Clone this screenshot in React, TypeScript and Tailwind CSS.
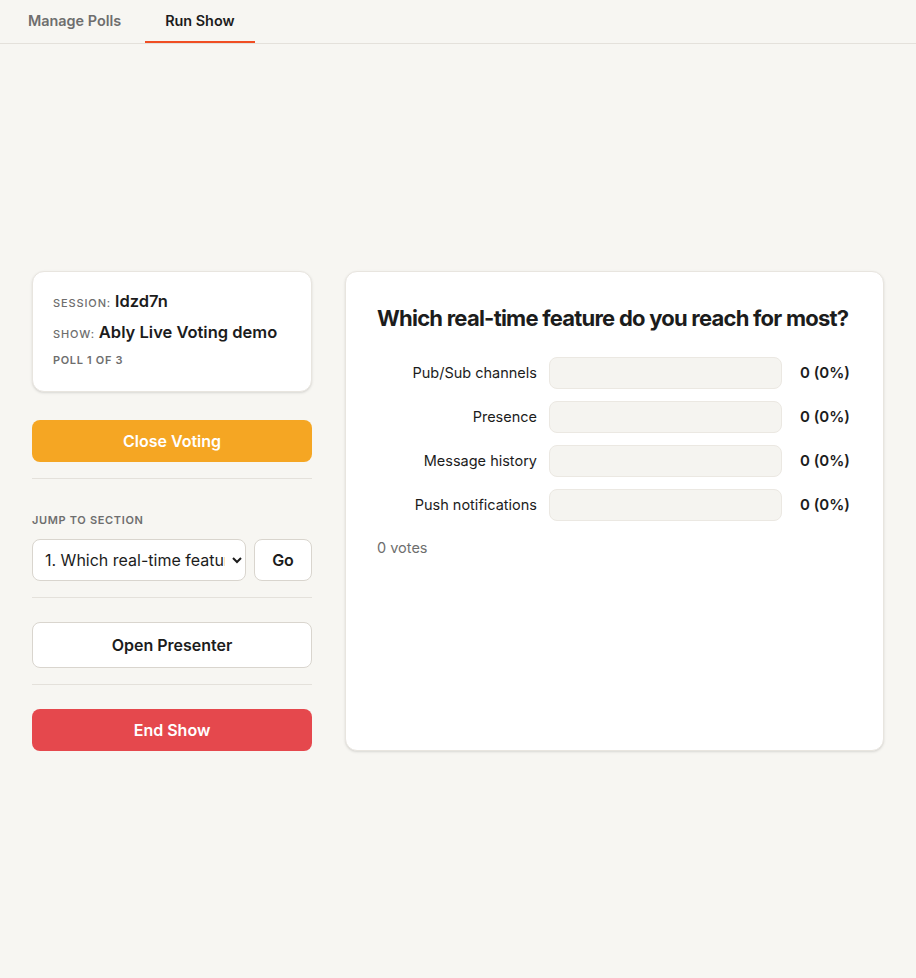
import { useState } from "react";

type Option = {
  label: string;
  votes: number;
};

const options: Option[] = [
  { label: "Pub/Sub channels", votes: 0 },
  { label: "Presence", votes: 0 },
  { label: "Message history", votes: 0 },
  { label: "Push notifications", votes: 0 },
];

export default function App() {
  const [tab, setTab] = useState<string>("run");
  const total = options.reduce((sum, o) => sum + o.votes, 0);

  return (
    <div
      className="min-h-screen flex flex-col bg-[#f7f6f2] text-[#1c1c1c]"
      style={{ fontFamily: "Inter, 'Liberation Sans', sans-serif" }}
    >
      {/* tabs */}
      <div className="flex gap-1 h-[44px] border-b border-[#e4e1db] px-2">
        <button
          onClick={() => setTab("manage")}
          className={`px-5 text-[14.4px] font-semibold border-b-2 ${
            tab === "manage" ? "border-[#f04e23] text-[#1c1c1c]" : "border-transparent text-[#6e6e6e]"
          }`}
        >
          Manage Polls
        </button>
        <button
          onClick={() => setTab("run")}
          className={`px-5 text-[14.4px] font-semibold border-b-2 ${
            tab === "run" ? "border-[#f04e23] text-[#1c1c1c]" : "border-transparent text-[#6e6e6e]"
          }`}
        >
          Run Show
        </button>
      </div>

      <div className="flex-1 flex items-center px-8">
        <div className="flex w-full gap-[33px] items-start">
          {/* left column */}
          <div className="w-[280px] shrink-0 flex flex-col">
            <div className="bg-white rounded-xl border border-[#e8e5df] shadow-sm px-5 pt-[17px] pb-[23px]">
              <div className="flex items-baseline gap-1">
                <span className="text-[11px] font-medium uppercase tracking-[0.08em] text-[#6e6e6e]">Session:</span>
                <span className="text-[16.5px] font-semibold">ldzd7n</span>
              </div>
              <div className="flex items-baseline gap-1 mt-[6px]">
                <span className="text-[11px] font-medium uppercase tracking-[0.08em] text-[#6e6e6e]">Show:</span>
                <span className="text-[16.5px] font-semibold">Ably Live Voting demo</span>
              </div>
              <div className="text-[11px] font-semibold uppercase tracking-[0.06em] text-[#6e6e6e] mt-[7px]">
                Poll 1 of 3
              </div>
            </div>

            <button className="mt-[28px] h-[42px] rounded-lg bg-[#f5a623] text-white font-semibold text-base">
              Close Voting
            </button>

            <div className="border-t border-[#e4e1db] mt-4 mb-[33px]" />

            <div className="text-[11px] font-semibold uppercase tracking-[0.06em] text-[#6e6e6e]">Jump to section</div>
            <div className="flex gap-2 mt-[10px]">
              <select className="flex-1 min-w-0 h-[42px] rounded-lg border border-[#d9d5ce] bg-white pl-2 pr-1 text-base text-[#1c1c1c]">
                <option>1. Which real-time feature do you reach for most?</option>
                <option>2. Next poll</option>
                <option>3. Last poll</option>
              </select>
              <button className="w-[58px] h-[42px] rounded-lg border border-[#d9d5ce] bg-white font-semibold text-base">
                Go
              </button>
            </div>

            <div className="border-t border-[#e4e1db] mt-4 mb-[24px]" />

            <button className="h-[46px] rounded-lg border border-[#d9d5ce] bg-white font-semibold text-base">
              Open Presenter
            </button>

            <div className="border-t border-[#e4e1db] mt-4 mb-[24px]" />

            <button className="h-[42px] rounded-lg bg-[#e5484d] text-white font-semibold text-base">
              End Show
            </button>
          </div>

          {/* poll card */}
          <div className="flex-1 min-w-0 h-[480px] bg-white rounded-xl border border-[#e8e5df] shadow-sm px-[31px] pt-[30px]">
            <h2 className="text-[22px] font-bold tracking-[-0.035em] whitespace-nowrap">
              Which real-time feature do you reach for most?
            </h2>
            <div className="flex flex-col gap-3 mt-[22px]">
              {options.map((o) => {
                const pct = total > 0 ? Math.round((o.votes / total) * 100) : 0;
                return (
                  <div key={o.label} className="flex items-center">
                    <div className="w-[172px] shrink-0 text-right text-[14.5px] pr-3">{o.label}</div>
                    <div className="w-[233px] h-[32px] rounded-lg bg-[#f5f4f0] border border-[#ebe8e2] overflow-hidden">
                      <div className="h-full bg-[#f5a623]" style={{ width: `${pct}%` }} />
                    </div>
                    <div className="pl-[18px] text-[15px] font-semibold">
                      {o.votes} ({pct}%)
                    </div>
                  </div>
                );
              })}
            </div>
            <div className="mt-4 text-[14.5px] text-[#6e6e6e]">{total} votes</div>
          </div>
        </div>
      </div>
    </div>
  );
}
